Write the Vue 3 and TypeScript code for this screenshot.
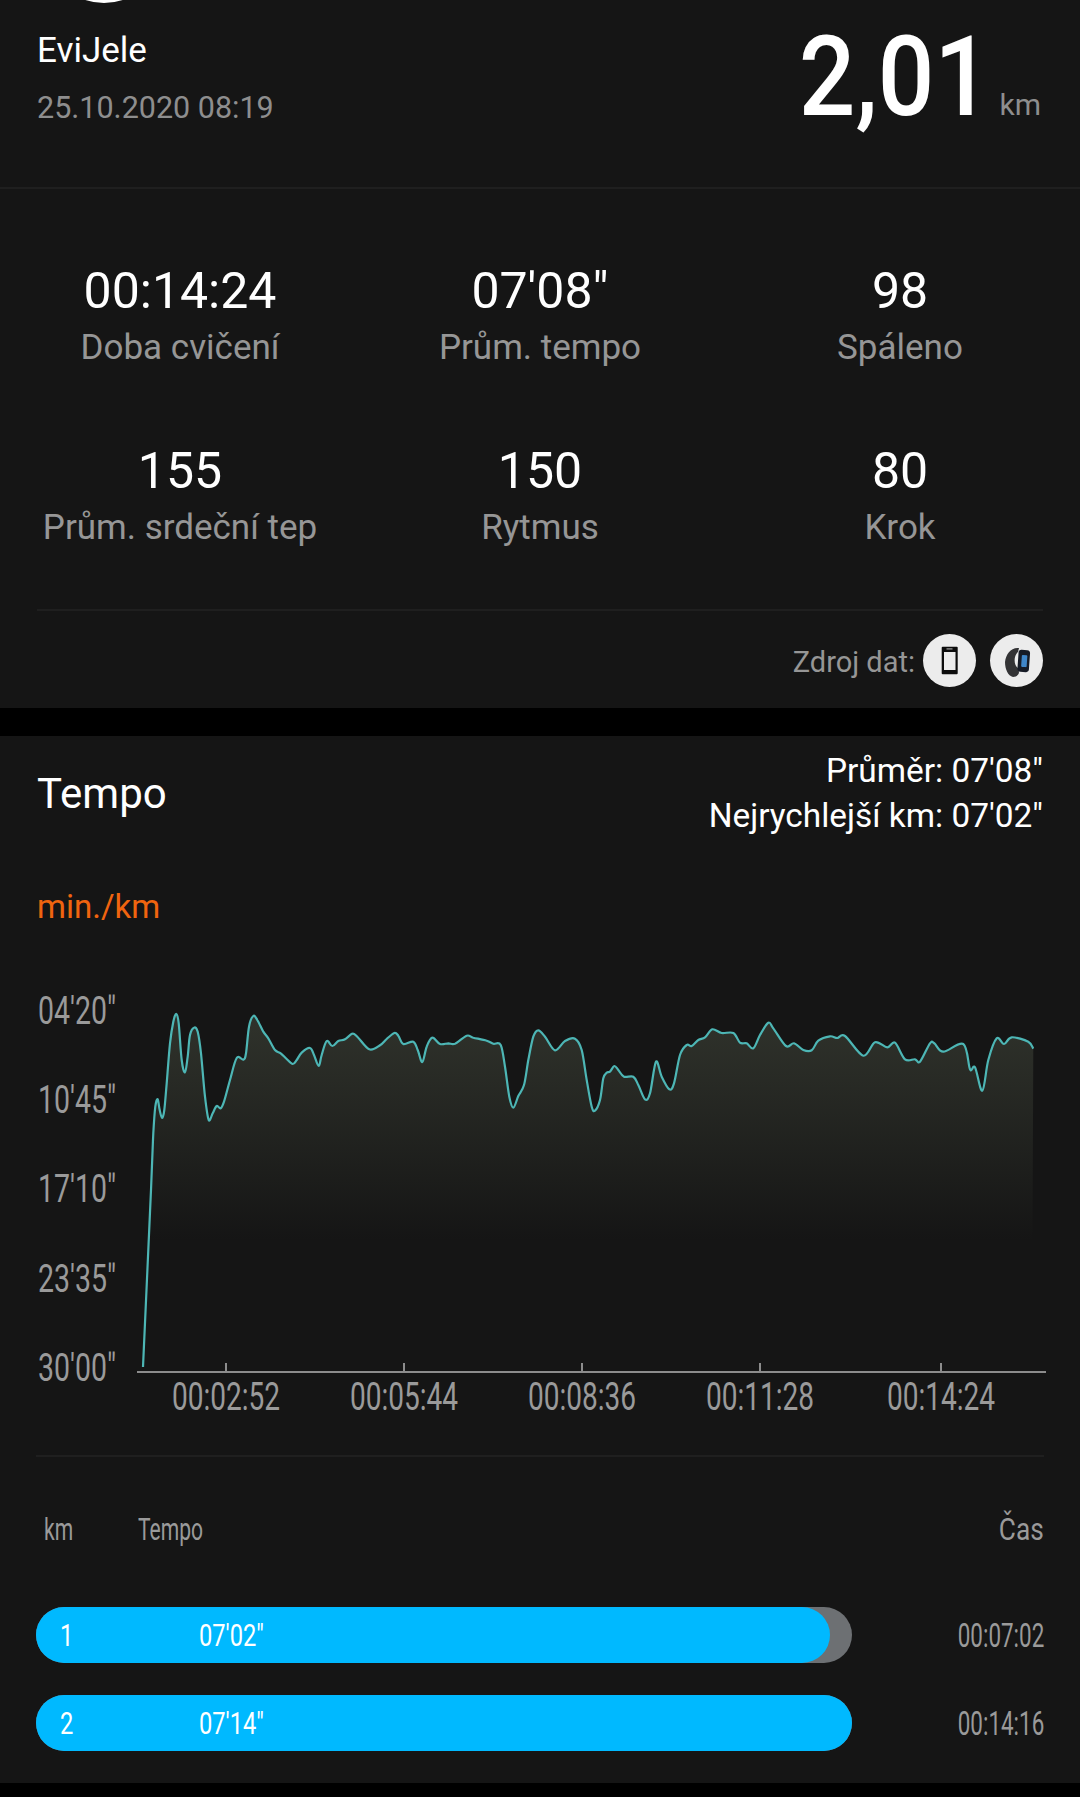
<template>
  <div class="page">
    <section class="card summary">
      <div class="avatar-edge"></div>
      <header class="head">
        <div class="who">
          <div class="who-name">EviJele</div>
          <div class="who-date">25.10.2020 08:19</div>
        </div>
        <div class="dist"><span class="dist-num">2,01</span><span class="dist-unit">km</span></div>
      </header>
      <div class="stats">
        <div v-for="s in stats" :key="s.label" class="stat">
          <div class="stat-val">{{ s.value }}</div>
          <div class="stat-label">{{ s.label }}</div>
        </div>
      </div>
      <div class="source">
        <span class="source-text">Zdroj dat:</span>
        <span class="source-ic">
          <svg width="53" height="53" viewBox="0 0 53 53">
            <rect x="18.7" y="12.7" width="16" height="27.6" rx="1" fill="#0c0c0c" />
            <rect x="21" y="18" width="11.5" height="18" fill="#ececec" />
            <rect x="23.5" y="14.2" width="6" height="1.4" fill="#8a8a8a" />
          </svg>
        </span>
        <span class="source-ic">
          <svg width="53" height="53" viewBox="0 0 53 53">
            <path d="M29 14C21 13 16 20 15 28c0 7 3 14 8 15 3 0 6-2 6-5l-1-4c-4-2-5-12 0-16z" fill="#333335" />
            <rect x="28" y="16" width="11.5" height="22" rx="3" transform="rotate(4 34 27)" fill="#161b26" />
            <rect x="31.5" y="21" width="5.5" height="12" rx="1" transform="rotate(4 34 27)" fill="#3f86c9" />
          </svg>
        </span>
      </div>
    </section>

    <section class="card tempo">
      <header class="tempo-head">
        <h2 class="tempo-title">Tempo</h2>
        <div class="tempo-meta">
          <div>Průměr: 07'08"</div>
          <div>Nejrychlejší km: 07'02"</div>
        </div>
      </header>
      <div class="tempo-unit">min./km</div>

      <svg class="chart" width="1080" height="472" viewBox="0 0 1080 472">
        <defs>
          <linearGradient id="fade" gradientUnits="userSpaceOnUse" x1="0" y1="70" x2="0" y2="290">
            <stop offset="0" stop-color="#2f322b" />
            <stop offset="1" stop-color="#151515" />
          </linearGradient>
        </defs>
        <path :d="areaPath" fill="url(#fade)" />
        <path :d="linePath" fill="none" stroke="#4db6b5" stroke-width="2.2" stroke-linejoin="round" />
        <line x1="137" x2="1046" :y1="axisY" :y2="axisY" stroke="#8c8c8c" stroke-width="2" />
        <line v-for="t in xTicks" :key="t.x" :x1="t.x" :x2="t.x" :y1="axisY - 9" :y2="axisY" stroke="#8c8c8c" stroke-width="2" />
        <text v-for="t in yLabels" :key="t.text" class="axis" :transform="`translate(38 ${t.y}) scale(0.75 1)`">{{ t.text }}</text>
        <text v-for="t in xTicks" :key="t.text" class="axis" :transform="`translate(${t.x - 54} ${axisY + 38}) scale(0.738 1)`">{{ t.text }}</text>
      </svg>

      <div class="laps">
        <div class="laps-head">
          <span class="lh-km">km</span>
          <span class="lh-tempo">Tempo</span>
          <span class="lh-time">Čas</span>
        </div>
        <div v-for="l in laps" :key="l.km" class="lap">
          <div class="lap-track">
            <div class="lap-fill" :style="{ width: l.pct + '%' }">
              <span class="lap-km">{{ l.km }}</span>
              <span class="lap-pace">{{ l.pace }}</span>
            </div>
          </div>
          <span class="lap-time">{{ l.time }}</span>
        </div>
      </div>
    </section>
  </div>
</template>

<script setup lang="ts">
import { computed } from 'vue';

const stats = [
  { value: '00:14:24', label: 'Doba cvičení' },
  { value: `07'08"`, label: 'Prům. tempo' },
  { value: '98', label: 'Spáleno' },
  { value: '155', label: 'Prům. srdeční tep' },
  { value: '150', label: 'Rytmus' },
  { value: '80', label: 'Krok' },
];

const laps = [
  { km: 1, pace: `07'02"`, time: '00:07:02', pct: 97.3 },
  { km: 2, pace: `07'14"`, time: '00:14:16', pct: 100 },
];

// chart svg starts at page y 950
const top = 950;
const axisY = 1372 - top;

const yLabels = [
  { text: `04'20"`, y: 1024 - top },
  { text: `10'45"`, y: 1113 - top },
  { text: `17'10"`, y: 1202 - top },
  { text: `23'35"`, y: 1292 - top },
  { text: `30'00"`, y: 1381 - top },
];

const xTicks = [
  { x: 226, text: '00:02:52' },
  { x: 404, text: '00:05:44' },
  { x: 582, text: '00:08:36' },
  { x: 760, text: '00:11:28' },
  { x: 941, text: '00:14:24' },
];

// traced in two crops, each [x, y] at 3x from its own origin
const left: number[][] = [
  [93,600],[100,430],[106,350],[113,328],[119,360],[126,384],[133,360],[140,280],[150,160],[160,95],[169,72],[176,100],[185,210],[195,247],[203,200],[210,135],[222,113],[233,125],[243,190],[255,320],[266,390],[278,370],[290,348],[302,355],[312,335],[330,270],[350,204],[370,209],[378,190],[387,110],[400,78],[412,90],[430,125],[445,145],[465,180],[482,190],[500,207],[518,222],[530,210],[545,188],[570,174],[582,195],[596,228],[605,195],[620,153],[637,168],[655,153],[675,148],[697,131],[712,140],[748,178],[780,166],[800,147],[823,129],[835,137],[850,162],[880,155],[893,180],[907,216],[920,170],[937,143],[960,162],[985,160],[1005,161],[1040,137],[1060,143],[1100,152],[1120,161],[1142,165],[1155,230],[1168,320],[1180,353],[1195,318],[1212,285],[1225,210],[1240,140],[1255,121],[1275,140],[1305,181],[1335,153],[1365,146],[1385,180],[1400,270],[1415,350],[1425,362],
];
const right: number[][] = [
  [0,330],[10,265],[20,248],[30,245],[43,228],[55,240],[72,260],[100,260],[115,285],[135,328],[150,310],[168,215],[185,260],[208,298],[222,280],[240,195],[260,165],[275,168],[295,150],[315,142],[337,118],[365,129],[400,129],[420,158],[440,160],[460,175],[480,135],[505,98],[520,115],[558,168],[582,160],[610,180],[635,181],[655,152],[690,139],[712,144],[735,138],[790,197],[825,157],[862,172],[885,158],[915,208],[945,208],[960,215],[990,160],[1003,160],[1030,185],[1090,162],[1110,238],[1125,232],[1147,302],[1165,210],[1190,145],[1212,162],[1235,142],[1285,155],[1300,176],
];

const points = computed(() => [
  [143, 1367 - top],
  ...left.map(([x, y]) => [120 + x / 3, 990 + y / 3 - top]),
  ...right.map(([x, y]) => [600 + x / 3, 990 + y / 3 - top]),
]);

// catmull-rom through the traced points
function smooth(p: number[][]): string {
  let d = `M${p[0][0]} ${p[0][1].toFixed(1)}`;
  for (let i = 0; i < p.length - 1; i++) {
    const a = p[i - 1] ?? p[i];
    const b = p[i];
    const c = p[i + 1];
    const e = p[i + 2] ?? c;
    const c1x = b[0] + (c[0] - a[0]) / 6;
    const c1y = b[1] + (c[1] - a[1]) / 6;
    const c2x = c[0] - (e[0] - b[0]) / 6;
    const c2y = c[1] - (e[1] - b[1]) / 6;
    d += `C${c1x.toFixed(1)} ${c1y.toFixed(1)} ${c2x.toFixed(1)} ${c2y.toFixed(1)} ${c[0].toFixed(1)} ${c[1].toFixed(1)}`;
  }
  return d;
}

const linePath = computed(() => smooth(points.value));
const areaPath = computed(() => `${linePath.value}L1032 ${axisY}L143 ${axisY}Z`);
</script>

<style scoped>
.page {
  width: 1080px;
  height: 1797px;
  overflow: hidden;
  background: #000;
  font-family: Roboto, "Noto Sans", sans-serif;
  color: #fff;
}

.card {
  background: #151515;
}

.summary {
  position: relative;
  height: 708px;
  overflow: hidden;
}

.avatar-edge {
  position: absolute;
  left: 44px;
  top: -117px;
  width: 120px;
  height: 120px;
  border-radius: 50%;
  background: #fff;
}

.head {
  display: flex;
  justify-content: space-between;
  height: 189px;
  padding: 0 37px;
  box-sizing: border-box;
  border-bottom: 2px solid #1f1f1f;
}

.who {
  padding-top: 29px;
}

.who-name {
  font-size: 35px;
  line-height: 44px;
}

.who-date {
  margin-top: 13px;
  font-size: 30.5px;
  line-height: 44px;
  color: #8e8e8e;
}

.dist {
  display: flex;
  align-items: flex-start;
  gap: 8px;
  margin-right: 2px;
}

.dist-num {
  display: inline-block;
  margin-top: 15px;
  font-size: 112px;
  line-height: 124px;
  font-weight: 500;
  transform-origin: right center;
  transform: scaleX(0.89);
}

.dist-unit {
  margin-top: 87px;
  font-size: 30px;
  line-height: 36px;
  color: #8e8e8e;
}

.stats {
  display: grid;
  grid-template-columns: repeat(3, 360px);
  grid-auto-rows: 180px;
  margin-top: 72px;
  height: 348px;
}

.stat {
  text-align: center;
}

.stat-val {
  font-size: 50px;
  line-height: 60px;
}

.stat-label {
  margin-top: 5px;
  font-size: 35px;
  line-height: 44px;
  color: #969696;
}

.source {
  display: flex;
  align-items: center;
  justify-content: flex-end;
  gap: 14px;
  margin: 0 37px;
  height: 97px;
  padding-top: 4px;
  border-top: 2px solid #1f1f1f;
  box-sizing: border-box;
}

.source-text {
  margin: 3px -6px 0 0;
  font-size: 29px;
  color: #969696;
}

.source-ic {
  width: 53px;
  height: 53px;
  border-radius: 50%;
  background: #ececec;
}

.source-ic svg {
  display: block;
}

.tempo {
  margin-top: 28px;
  height: 1047px;
  padding-top: 1px;
  box-sizing: border-box;
}

.tempo-head {
  display: flex;
  justify-content: space-between;
  align-items: center;
  padding: 11px 37px 0;
}

.tempo-title {
  margin: 0;
  font-size: 42px;
  font-weight: 400;
}

.tempo-meta {
  text-align: right;
  font-size: 33.4px;
  line-height: 45px;
}

.tempo-unit {
  margin: 47px 37px 0;
  font-size: 33px;
  line-height: 44px;
  color: #f0640f;
}

.chart {
  display: block;
  margin-top: 21px;
}

.axis {
  fill: #9a9a9a;
  font-size: 38px;
  font-family: Roboto, sans-serif;
}

.laps {
  margin: 33px 36px 0;
  border-top: 2px solid #1f1f1f;
}

.laps-head {
  display: flex;
  align-items: center;
  height: 124px;
  margin-top: 10px;
  font-size: 31px;
  color: #9a9a9a;
}

.laps-head span {
  display: inline-block;
  transform-origin: left center;
  transform: scaleX(0.68);
}

.lh-km {
  width: 94px;
  margin-left: 8px;
}

.lh-tempo {
  flex: 1;
}

.laps-head .lh-time {
  transform-origin: right center;
  transform: scaleX(0.82);
  font-size: 32px;
}

.lap {
  display: flex;
  align-items: center;
  justify-content: space-between;
  height: 88px;
}

.lap-track {
  width: 816px;
  height: 56px;
  border-radius: 28px;
  background: #6d7073;
}

.lap-fill {
  display: flex;
  align-items: center;
  height: 100%;
  border-radius: 28px;
  background: #00b9ff;
  font-size: 32px;
}

.lap-km,
.lap-pace {
  display: inline-block;
  transform-origin: left center;
  transform: scaleX(0.74);
}

.lap-km {
  width: 139px;
  margin-left: 24px;
}

.lap-time {
  font-size: 33px;
  color: #9a9a9a;
  transform-origin: right center;
  transform: scaleX(0.68);
}
</style>

<style>
html, body {
  background: #000;
}
</style>
